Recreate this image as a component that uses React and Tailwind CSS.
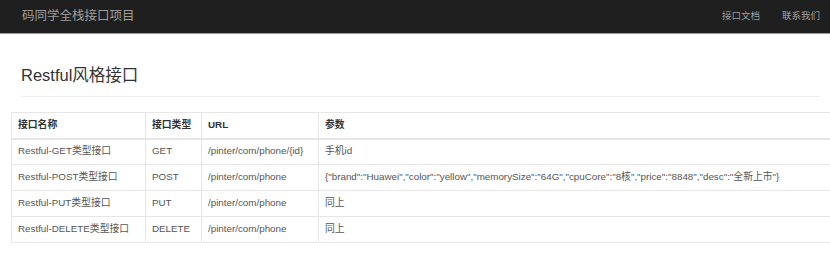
export default function App() {
    const rows = [
        { name: "Restful-GET类型接口", type: "GET", url: "/pinter/com/phone/{id}", params: "手机id" },
        {
            name: "Restful-POST类型接口",
            type: "POST",
            url: "/pinter/com/phone",
            params: '{"brand":"Huawei","color":"yellow","memorySize":"64G","cpuCore":"8核","price":"8848","desc":"全新上市"}',
        },
        { name: "Restful-PUT类型接口", type: "PUT", url: "/pinter/com/phone", params: "同上" },
        { name: "Restful-DELETE类型接口", type: "DELETE", url: "/pinter/com/phone", params: "同上" },
    ];

    const font = { fontFamily: '"Liberation Sans", "Noto Sans CJK SC", sans-serif' };

    return (
        <div className="w-[830px] h-[258px] overflow-hidden bg-white" style={font}>
            {/* Navbar */}
            <div className="h-[34px] bg-[#1f1f1f] border-b border-[#9a9a9a] flex items-center justify-between pl-[22px] pr-[10px]">
                <span className="text-[12.5px] text-[#9d9d9d]">码同学全栈接口项目</span>
                <div className="flex gap-[22px] text-[9.5px] text-[#9d9d9d]">
                    <span>接口文档</span>
                    <span>联系我们</span>
                </div>
            </div>

            {/* Title */}
            <div className="pl-[21px] pr-[10px] pt-[31px]">
                <h1 className="text-[16.5px] leading-[20px] text-[#333]">Restful风格接口</h1>
                <div className="mt-[11px] border-t border-[#eeeeee]"></div>
            </div>

            {/* Table */}
            <div className="ml-[11px] mt-[15px]">
                <table className="w-[830px] border-collapse text-[9.8px] text-[#555]">
                    <thead>
                        <tr className="h-[26px]">
                            <th className="w-[134px] px-[6px] text-left font-bold text-[#333] border border-[#e6e6e6] border-b-2">接口名称</th>
                            <th className="w-[56px] px-[6px] text-left font-bold text-[#333] border border-[#e6e6e6] border-b-2">接口类型</th>
                            <th className="w-[117px] px-[6px] text-left font-bold text-[#333] border border-[#e6e6e6] border-b-2">URL</th>
                            <th className="px-[6px] text-left font-bold text-[#333] border border-[#e6e6e6] border-b-2">参数</th>
                        </tr>
                    </thead>
                    <tbody>
                        {rows.map((r) => (
                            <tr key={r.type} className="h-[26px]">
                                <td className="px-[6px] border border-[#e6e6e6] whitespace-nowrap">{r.name}</td>
                                <td className="px-[6px] border border-[#e6e6e6]">{r.type}</td>
                                <td className="px-[6px] border border-[#e6e6e6] whitespace-nowrap">{r.url}</td>
                                <td className="px-[6px] border border-[#e6e6e6] whitespace-nowrap">{r.params}</td>
                            </tr>
                        ))}
                    </tbody>
                </table>
            </div>
        </div>
    );
}
